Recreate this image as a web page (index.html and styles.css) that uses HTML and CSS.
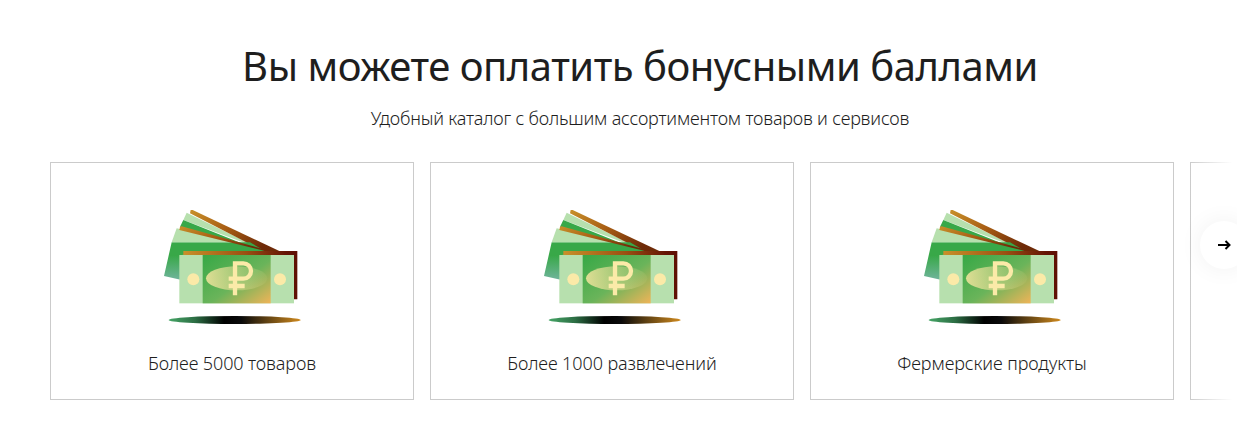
FILE: index.html
```html
<!DOCTYPE html>
<html lang="ru">
<head>
<meta charset="utf-8">
<title>Бонусные баллы</title>
<link rel="stylesheet" href="styles.css">
</head>
<body>
<svg class="defs" width="0" height="0" aria-hidden="true">
  <defs>
    <linearGradient id="brown" x1="0" y1="0" x2="1" y2="0"><stop offset="0" stop-color="#c8912a"/><stop offset=".55" stop-color="#9a4f12"/><stop offset=".9" stop-color="#651405"/><stop offset="1" stop-color="#5e1004"/></linearGradient>
    <linearGradient id="brown2" x1="0" y1="0" x2="1" y2="0.5"><stop offset="0" stop-color="#c8902a"/><stop offset=".5" stop-color="#a85e14"/><stop offset="1" stop-color="#6e2a08"/></linearGradient>
    <linearGradient id="teal" x1="0" y1="0" x2="0" y2="1"><stop offset="0" stop-color="#38a848"/><stop offset=".35" stop-color="#38a848"/><stop offset="1" stop-color="#70b49c"/></linearGradient>
    <linearGradient id="money" x1="0" y1="0" x2="1" y2="1"><stop offset="0" stop-color="#36a846"/><stop offset=".55" stop-color="#6ab45a"/><stop offset="1" stop-color="#f0b458"/></linearGradient>
    <linearGradient id="oval" x1="0" y1="0" x2="1" y2="0"><stop offset="0" stop-color="#f8e6a0" stop-opacity=".85"/><stop offset="1" stop-color="#f8e6a0" stop-opacity=".06"/></linearGradient>
    <linearGradient id="shadow" x1="0" y1="0" x2="1" y2="0"><stop offset="0" stop-color="#46a566"/><stop offset=".2" stop-color="#2c6e44"/><stop offset=".42" stop-color="#000"/><stop offset=".55" stop-color="#0a0a0a"/><stop offset="1" stop-color="#d08a1e"/></linearGradient>
    <symbol id="cash" viewBox="0 0 495 405">
      <polygon points="110,38 340,150 100,60" fill="#b7e0ae"/>
      <polygon points="100,60 330,152 90,80" fill="#38a848"/>
      <polygon points="122,30 128,30 388,153 340,153 120,40" fill="url(#brown2)"/>
      <polygon points="65,127 300,127 345,153 95,165 95,240 42,228" fill="url(#teal)"/>
      <polygon points="80,85 65,127 265,127" fill="#b7e0ae"/>
      <polygon points="90,80 95,79 350,150 345,153 88,90" fill="url(#brown2)"/>
      <polygon points="100,153 442,153 442,298 432,298 432,165 100,165" fill="url(#brown)"/>
      <rect x="88" y="165" width="344" height="145" fill="#b7e0ae"/>
      <rect x="158" y="165" width="204" height="145" fill="url(#money)"/>
      <circle cx="130" cy="238" r="18" fill="#fbeaa8"/>
      <circle cx="390" cy="238" r="18" fill="#fbeaa8"/>
      <ellipse cx="260" cy="235" rx="92" ry="36" fill="url(#oval)"/>
      <path d="M255 286V190H280a23 23 0 0 1 0 46H236M236 258H284" fill="none" stroke="#fbeaa8" stroke-width="13"/>
      <ellipse cx="254" cy="360" rx="198" ry="12" fill="url(#shadow)"/>
    </symbol>
  </defs>
</svg>
<main class="section">
  <h1 class="title">Вы можете оплатить бонусными баллами</h1>
  <p class="subtitle">Удобный каталог с большим ассортиментом товаров и сервисов</p>
  <div class="carousel">
    <article class="card">
      <svg class="card-icon" aria-hidden="true"><use href="#cash"/></svg>
      <p class="card-label">Более 5000 товаров</p>
    </article>
    <article class="card">
      <svg class="card-icon" aria-hidden="true"><use href="#cash"/></svg>
      <p class="card-label">Более 1000 развлечений</p>
    </article>
    <article class="card">
      <svg class="card-icon" aria-hidden="true"><use href="#cash"/></svg>
      <p class="card-label">Фермерские продукты</p>
    </article>
    <article class="card"></article>
    <div class="fade"></div>
    <button class="next" type="button" aria-label="Далее">
      <svg width="14" height="12" viewBox="0 0 14 12" aria-hidden="true"><path d="M1 6H12M8.500 2L12.500 6L8.500 10" fill="none" stroke="#000" stroke-width="2"/></svg>
    </button>
  </div>
</main>
</body>
</html>
```
FILE: styles.css
```css
* { box-sizing: border-box; }
html, body { margin: 0; height: 100%; overflow: hidden; background: #fff; }
body { font-family: "Noto Sans", "Open Sans", sans-serif; color: #1e1e1e; }
.defs { position: absolute; }
.section { width: 1280px; padding-top: 39px; text-align: center; }
.title { margin: 0; font-size: 40px; line-height: 54px; font-weight: 400; letter-spacing: -0.47px; }
.subtitle { margin: 13px 0 0; font-size: 18px; line-height: 24px; font-weight: 300; letter-spacing: -0.19px; }
.carousel { position: relative; display: flex; gap: 16px; margin-top: 32px; padding-left: 50px; width: 1237px; overflow: hidden; }
.card { flex: 0 0 364px; height: 238px; border: 1px solid #cbcbcb; display: flex; flex-direction: column; align-items: center; padding-top: 37px; }
.card-icon { width: 165px; height: 135px; display: block; }
.card-label { margin: 16px 0 0; font-size: 18px; line-height: 24px; font-weight: 300; letter-spacing: -0.1px; }
.fade { position: absolute; top: 0; bottom: 0; right: 0; width: 47px; background: linear-gradient(90deg, rgba(255,255,255,0), #fff 90%); }
.next { position: absolute; left: 1200px; top: 59px; width: 48px; height: 48px; padding: 0; border: 0; border-radius: 50%; background: #fff; box-shadow: 0 0 24px rgba(0,0,0,.06); display: flex; align-items: center; justify-content: center; }
```
